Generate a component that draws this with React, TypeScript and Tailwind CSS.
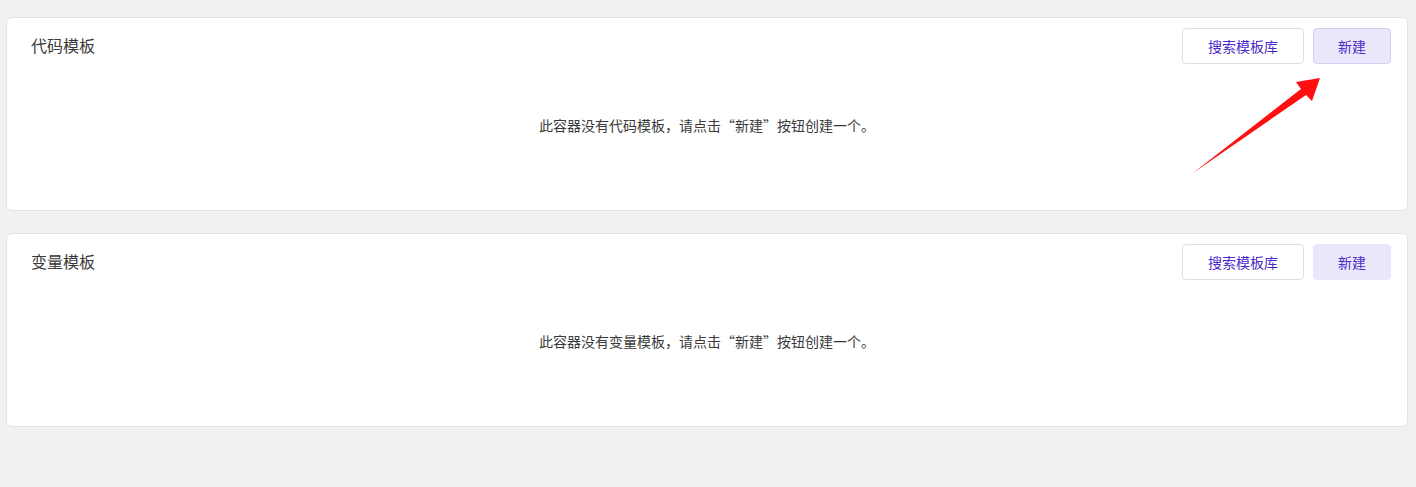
const font = { fontFamily: '"Noto Sans CJK SC", "Noto Sans", sans-serif' };

function TemplateCard({ title, message, bordered }: { title: string; message: string; bordered: boolean }) {
  return (
    <div className="h-[194px] rounded-[6px] border border-[#e1e3e8] bg-white">
      <div className="mt-[10px] flex h-[36px] items-center justify-between pl-[24px] pr-[16px]">
        <span className="-mt-[3px] text-[16px] text-[#3a3a3a]">{title}</span>
        <div className="flex gap-[9px]">
          <button className="h-[36px] w-[122px] rounded-[4px] border border-[#dcdfe6] bg-white text-[14px] text-[#4a2bc8]">
            搜索模板库
          </button>
          <button
            className={
              bordered
                ? "h-[36px] w-[78px] rounded-[4px] border border-[#d4cdf3] bg-[#ebe7fb] text-[14px] text-[#4a2bc8]"
                : "h-[36px] w-[78px] rounded-[4px] border border-[#ebe7fb] bg-[#ebe7fb] text-[14px] text-[#4a2bc8]"
            }
          >
            新建
          </button>
        </div>
      </div>
      <p className="mt-[51px] text-center text-[14px] leading-[20px] text-[#3a3a3a]">{message}</p>
    </div>
  );
}

export default function App() {
  return (
    <div className="relative h-[487px] w-[1416px] bg-[#f0f1f3] pl-[6px] pr-[8px] pt-[17px]" style={font}>
      <div className="flex flex-col gap-[22px]">
        <TemplateCard title="代码模板" message="此容器没有代码模板，请点击“新建”按钮创建一个。" bordered />
        <TemplateCard title="变量模板" message="此容器没有变量模板，请点击“新建”按钮创建一个。" bordered={false} />
      </div>
      <svg className="absolute left-[1190px] top-[74px]" width="135" height="104" viewBox="0 0 135 104">
        <path d="M3 99 L111 15 L106 8 L130 4 L122 27 L116 21 Z" fill="#ff1010" />
      </svg>
    </div>
  );
}
